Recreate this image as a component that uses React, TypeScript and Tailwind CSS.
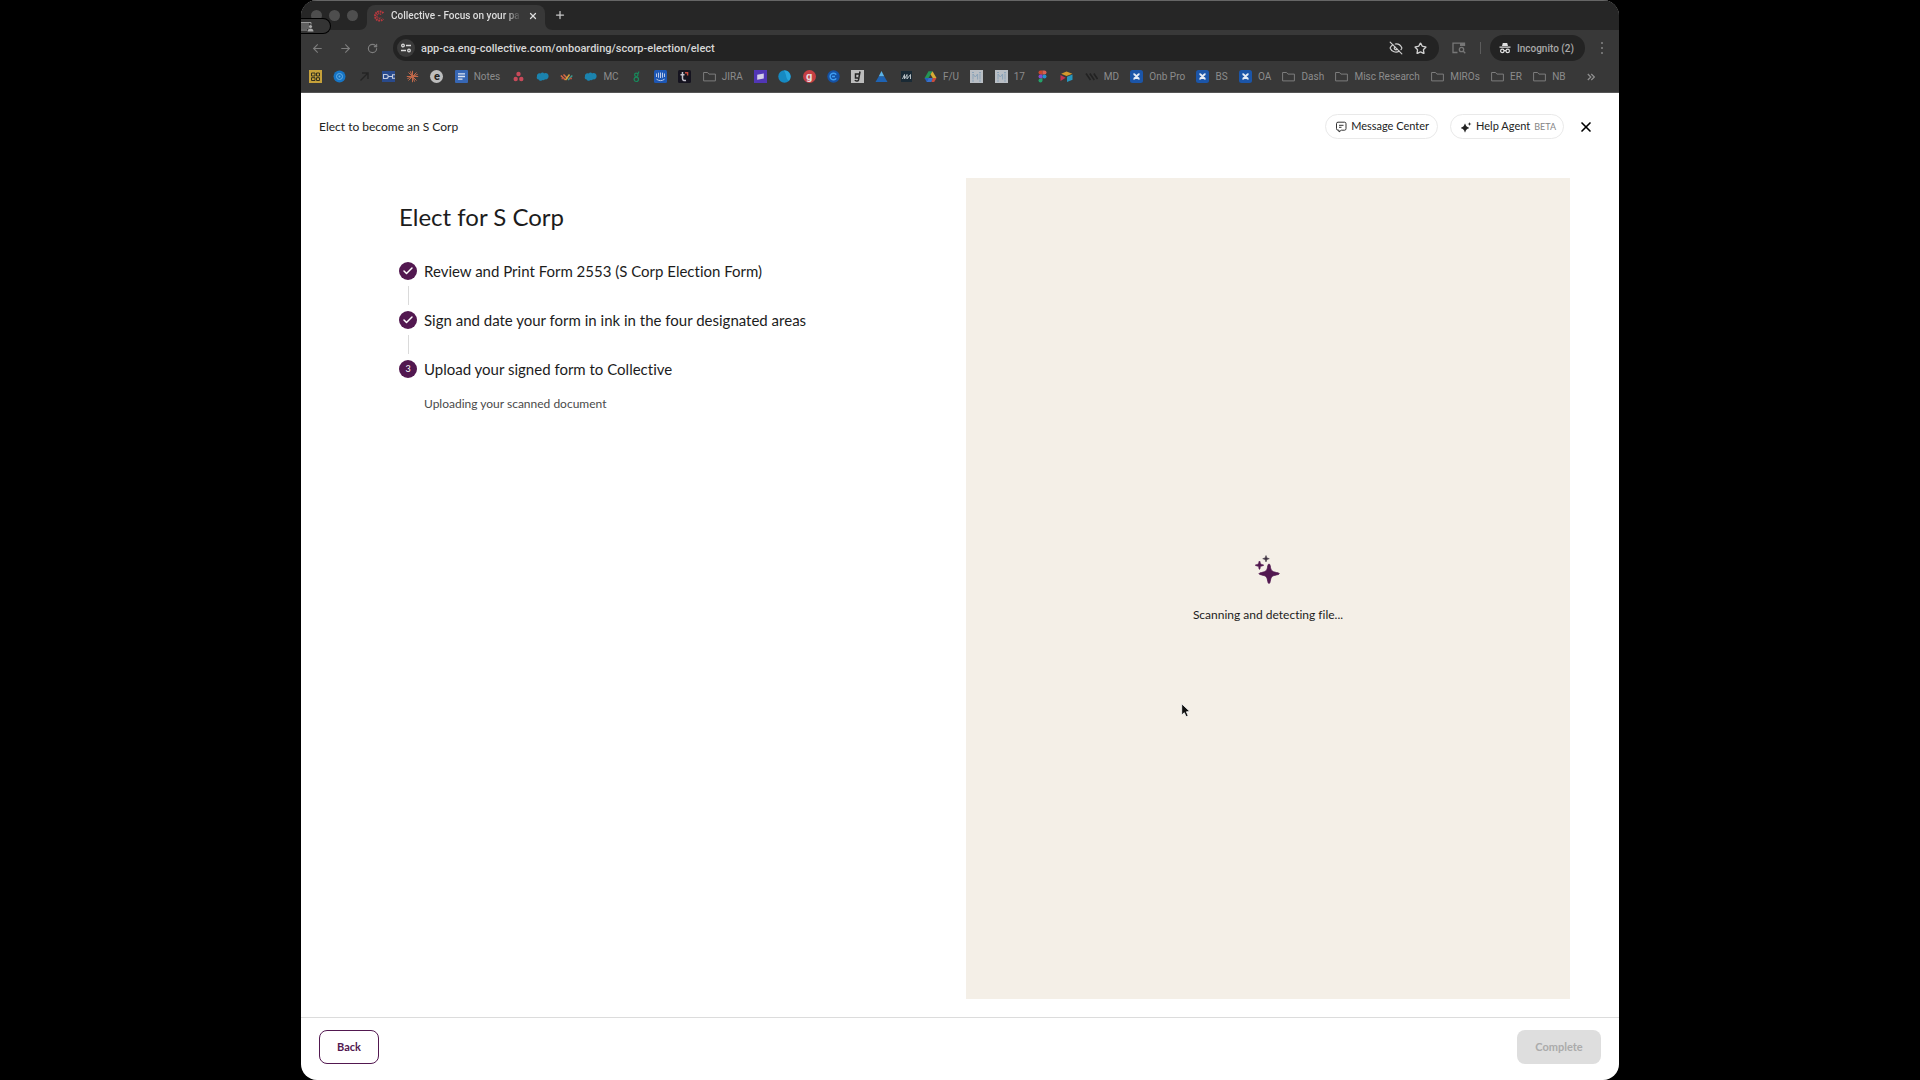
import type { ReactNode } from "react";
import { ArrowLeft, ArrowRight, Check, EyeOff, Plus, RotateCw, Star, X } from "lucide-react";

type BookmarkItem = { name: string; label?: string; icon: ReactNode };

const Svg = ({ children }: { children: ReactNode }) => (
  <svg viewBox="0 0 13 13" className="h-[13px] w-[13px]" aria-hidden="true">
    {children}
  </svg>
);

const Letter = ({ className, children }: { className: string; children: ReactNode }) => (
  <span className={`flex h-[13px] w-[13px] items-center justify-center text-[11px] leading-none font-bold ${className}`}>
    {children}
  </span>
);

const Folder = () => (
  <Svg>
    <path d="M.6 2.500h4l1.300 1.600h6.500v6.800H.6z" fill="none" stroke="#7c7c7c" strokeWidth="1" strokeLinejoin="round" />
  </Svg>
);

const Cloud = () => (
  <Svg>
    <path d="M1 6.200C.6 4 2.800 2.400 4.700 3.500 5.600 2.200 7.400 2.300 8.200 3.400c2-.9 4.400.3 4.400 2.800 0 2.300-1.800 3.500-3.600 3.100-.7 1.100-2 1.200-2.800.7-1.200 1.500-3 .8-3.500-.5C1 9.500.2 7.500 1 6.200z" fill="#1b83ae" />
  </Svg>
);

const Confluence = () => (
  <Svg>
    <rect width="13" height="13" rx="2.500" fill="#1b55a8" />
    <path d="M3.500 4c2 .2 4 4.800 6 5M9.500 4c-2 .2-4 4.800-6 5" fill="none" stroke="#e4ebf5" strokeWidth="2" />
  </Svg>
);

const Miro = () => (
  <Svg>
    <path d="M0 0h13v13H0z" fill="#b9bec4" />
    <path d="M3 9.500V4l2.300 3L7.600 4v5.500M10 3.500v6M2 2.500h2M9 2.500h2M2 11h2M9 11h2" fill="none" stroke="#8ba3b8" strokeWidth="1" />
  </Svg>
);

const bookmarks: BookmarkItem[] = [
  {
    name: "Grid",
    icon: (
      <Svg>
        <path d="M0 0h13v13H0z" fill="#c6a13a" />
        <path d="M2.500 3h3.500v3H2.500zM7.500 3h3v3h-3zM2.500 7.700H6v2.800H2.500zM7.500 7.700h3v2.800h-3z" fill="none" stroke="#33301f" strokeWidth="1" />
      </Svg>
    ),
  },
  {
    name: "Target",
    icon: (
      <Svg>
        <circle cx="6.500" cy="6.500" r="6" fill="#1674c4" />
        <circle cx="6.500" cy="6.500" r="3" fill="none" stroke="#65aee4" strokeWidth="1" />
        <circle cx="6.500" cy="6.500" r="1" fill="#65aee4" />
      </Svg>
    ),
  },
  {
    name: "Arrow",
    icon: (
      <Svg>
        <path d="M2.500 10.500 9.500 3.500M4 3h6v6" fill="none" stroke="#242424" strokeWidth="1.400" />
      </Svg>
    ),
  },
  {
    name: "Plug",
    icon: (
      <Svg>
        <path d="M0 1h13v11H0z" fill="#294a8c" />
        <path d="M1.500 4.500H4c3 0 3 4 0 4H1.500zM6.500 6.500H10M13 4.700h-2.500v3.600H13" fill="none" stroke="#c3cbdc" strokeWidth="1.100" />
      </Svg>
    ),
  },
  {
    name: "Burst",
    icon: (
      <Svg>
        <path d="M6.500.8v11.400M.8 6.500h11.400M2.500 2.500l8 8M10.500 2.500l-8 8M4.300 1.300l4.400 10.400M1.300 8.700l10.400-4.400" stroke="#c2694a" strokeWidth="1" />
      </Svg>
    ),
  },
  { name: "E", icon: <Letter className="rounded-full bg-[#bdbdbd] text-[#202020]">e</Letter> },
  {
    name: "Notes",
    label: "Notes",
    icon: (
      <Svg>
        <rect width="13" height="13" rx="1" fill="#3767b5" />
        <path d="M3 3.800h7M3 6.500h7M3 9.200h4.500" stroke="#dce4f2" strokeWidth="1.300" />
      </Svg>
    ),
  },
  {
    name: "Asana",
    icon: (
      <Svg>
        <g fill="#c84a5a">
          <circle cx="6.500" cy="4" r="2.200" />
          <circle cx="3.700" cy="9" r="2.200" />
          <circle cx="9.300" cy="9" r="2.200" />
        </g>
      </Svg>
    ),
  },
  { name: "Salesforce", icon: <Cloud /> },
  {
    name: "Waves",
    icon: (
      <Svg>
        <g fill="none" strokeWidth="1.500">
          <path d="M.8 5.500 5.500 10M3.500 4.500l4 4" stroke="#d86a45" />
          <path d="M5.500 10 9.500 4.500" stroke="#d4a33c" />
          <path d="m8 10 4.300-4.500" stroke="#3c9c91" />
          <path d="M1.500 8.500h3M9.500 8.500H12" stroke="#b4533e" />
        </g>
      </Svg>
    ),
  },
  { name: "MC", label: "MC", icon: <Cloud /> },
  {
    name: "Greenhouse",
    icon: (
      <Svg>
        <g fill="none" stroke="#188a5c" strokeWidth="1.200">
          <circle cx="6.300" cy="4.800" r="1.700" />
          <circle cx="6.300" cy="9.300" r="2.200" />
          <path d="M7.600 3.700C8.700 3.300 8.800 2.300 8.800 1.500" />
        </g>
      </Svg>
    ),
  },
  {
    name: "Intercom",
    icon: (
      <Svg>
        <rect width="13" height="13" rx="1.500" fill="#1d57b5" />
        <path d="M2.500 3.500v3.500M4.500 2.700v5M6.500 2.500v5.500M8.500 2.700v5M10.500 3.500V7M2.500 9.200c2.500 1.900 5.500 1.900 8 0" fill="none" stroke="#b9c9e8" strokeWidth="1" />
      </Svg>
    ),
  },
  {
    name: "T",
    icon: (
      <Svg>
        <rect width="13" height="13" rx="1.500" fill="#15131f" />
        <path d="M4.500 2v6.500c0 1.800 1.200 2.300 3.500 1.900M2.500 4.800h4" fill="none" stroke="#c2bfcb" strokeWidth="1.500" />
        <path d="M7 2.800h2.600v2.700" fill="none" stroke="#c84a3f" strokeWidth="1.400" />
      </Svg>
    ),
  },
  { name: "JIRA", label: "JIRA", icon: <Folder /> },
  {
    name: "Flag",
    icon: (
      <Svg>
        <path d="M0 0h13v13H0z" fill="#5136b5" />
        <path d="m3.200 4.800 6.600-1.300v5L3.200 9.800z" fill="#d4cfe9" />
      </Svg>
    ),
  },
  {
    name: "Globe",
    icon: (
      <Svg>
        <circle cx="6.500" cy="6.500" r="6.200" fill="#1689c2" />
        <path d="M6 .5a6.200 6.200 0 0 1 5 10.200C7.500 9 9 5 6 .5z" fill="#27a4dc" />
      </Svg>
    ),
  },
  { name: "G", icon: <Letter className="rounded-full bg-[#c53f43] text-[#e9dfe0]">g</Letter> },
  {
    name: "Circle",
    icon: (
      <Svg>
        <circle cx="6.500" cy="6.500" r="6.200" fill="#1552a5" />
        <path d="M9.200 4.700a3.300 3.300 0 1 0 0 3.600M5 6.500h3" fill="none" stroke="#3f9df0" strokeWidth="1.500" />
      </Svg>
    ),
  },
  {
    name: "Script",
    icon: (
      <Svg>
        <path d="M0 0h13v13H0z" fill="#bcbcbc" />
        <path d="M9 1.500 7.500 10c-.5 1.500-3 1.300-3.500 0M8 4H4.500v4H7" fill="none" stroke="#232323" strokeWidth="1.500" />
      </Svg>
    ),
  },
  {
    name: "Peak",
    icon: (
      <Svg>
        <path d="m6.500 1 2.800 5.500H3.700z" fill="#5bb3e8" />
        <path d="M3.700 6.500h5.600L12.500 12H.5z" fill="#1e63b4" />
      </Svg>
    ),
  },
  {
    name: "Waveform",
    icon: (
      <Svg>
        <path d="M1 1h11v11H1z" fill="#1a2a35" />
        <path d="m2.500 9 2-4.500V9l2.500-4.500V9l3.500-4.500V9" fill="none" stroke="#b9c1c6" strokeWidth="1" />
      </Svg>
    ),
  },
  {
    name: "Drive",
    label: "F/U",
    icon: (
      <Svg>
        <path d="M4.500 1.200h4L4.300 8.500.5 8.300z" fill="#259455" />
        <path d="m8.500 1.200 4 6.800H8.700L6.500 4.300z" fill="#d6ab34" />
        <path d="M4 8h5l-1.500 4H2.700z" fill="#3971cb" />
        <path d="m.5 8 2.200 4L5 8z" fill="#245fbd" />
        <path d="M8.700 8h3.800l-2.300 4H7.500z" fill="#ca4b3d" />
      </Svg>
    ),
  },
  { name: "Board", icon: <Miro /> },
  { name: "Board 17", label: "17", icon: <Miro /> },
  {
    name: "Figma",
    icon: (
      <Svg>
        <path d="M6.500.5h-2a2 2 0 1 0 0 4h2z" fill="#c9472c" />
        <path d="M6.500.5h2a2 2 0 1 1 0 4h-2z" fill="#d96053" />
        <path d="M6.500 4.500h-2a2 2 0 1 0 0 4h2z" fill="#8549cf" />
        <circle cx="8.500" cy="6.500" r="2" fill="#2493cf" />
        <path d="M6.500 8.500h-2a2 2 0 1 0 2 2z" fill="#24a26a" />
      </Svg>
    ),
  },
  {
    name: "Airtable",
    icon: (
      <Svg>
        <path d="m6.500 1.500 5.800 2.200-5.800 2.200L1.200 3.700z" fill="#d49a2b" />
        <path d="m7 6.800 5.500-2.200v5.200L7 12z" fill="#2796bd" />
        <path d="M.5 5v6l5.200-3.200z" fill="#c43350" />
      </Svg>
    ),
  },
  {
    name: "MD",
    label: "MD",
    icon: (
      <Svg>
        <path d="m1 3.500 4.500 6.500M4.800 3.500 9.300 10M8.800 3.500l3.700 5.500" stroke="#222" strokeWidth="1.600" />
      </Svg>
    ),
  },
  { name: "Onb Pro", label: "Onb Pro", icon: <Confluence /> },
  { name: "BS", label: "BS", icon: <Confluence /> },
  { name: "OA", label: "OA", icon: <Confluence /> },
  { name: "Dash", label: "Dash", icon: <Folder /> },
  { name: "Misc Research", label: "Misc Research", icon: <Folder /> },
  { name: "MIROs", label: "MIROs", icon: <Folder /> },
  { name: "ER", label: "ER", icon: <Folder /> },
  { name: "NB", label: "NB", icon: <Folder /> },
];

const steps = [
  { title: "Review and Print Form 2553 (S Corp Election Form)", done: true },
  { title: "Sign and date your form in ink in the four designated areas", done: true },
  { title: "Upload your signed form to Collective", done: false },
];

const TabStrip = () => (
  <div className="relative flex h-[30px] items-end border-t border-[#666] bg-[#262626] pl-[10px]">
    <div className="flex h-[29px] items-center gap-[7px]">
      <span className="h-[11px] w-[11px] rounded-full bg-[#4e4e4e]"></span>
      <span className="h-[11px] w-[11px] rounded-full bg-[#4e4e4e]"></span>
      <span className="h-[11px] w-[11px] rounded-full bg-[#4e4e4e]"></span>
    </div>
    <div className="relative ml-[9px] flex h-[25px] w-[178px] items-center rounded-t-[8px] bg-[#383838] pr-[7px] pb-[4px] pl-[6px]">
      <svg viewBox="0 0 8 8" className="absolute bottom-0 -left-[8px] h-[8px] w-[8px]">
        <path d="M8 0v8H0c5 0 8-3 8-8z" fill="#383838" />
      </svg>
      <svg viewBox="0 0 8 8" className="absolute -right-[8px] bottom-0 h-[8px] w-[8px]">
        <path d="M0 0v8h8C3 8 0 5 0 0z" fill="#383838" />
      </svg>
      <svg viewBox="0 0 12 12" className="h-[12px] w-[12px] shrink-0">
        <path d="M10.300 3.200a4.600 4.600 0 1 0 0 5.600" fill="none" stroke="#b8383e" strokeWidth="2" strokeDasharray="1.700 .7" />
        <path d="M8 4.600a2.300 2.300 0 1 0 0 2.800" fill="none" stroke="#b8383e" strokeWidth="1.300" strokeDasharray="1.200 .6" />
      </svg>
      <span className="ml-[6px] w-[130px] mask-r-from-88% text-[10px] leading-4 font-medium whitespace-nowrap text-[#dcdcdc]">
        Collective - Focus on your pa
      </span>
      <button aria-label="Close tab" className="ml-auto text-[#dcdcdc]">
        <X className="h-[10px] w-[10px]" strokeWidth={3} />
      </button>
    </div>
    <button aria-label="New tab" className="mb-[9px] ml-[9px] text-[#c8c8c8]">
      <Plus className="h-[12px] w-[12px]" strokeWidth={2.5} />
    </button>
    {/* screen sharing badge */}
    <div className="absolute top-[17px] left-0 z-10 flex h-[16px] w-[30px] items-center rounded-r-full border border-l-0 border-black bg-[#343434]">
      <svg viewBox="0 0 13 11" className="h-[11px] w-[13px]">
        <path d="M0 2h8v6H0z" fill="#606060" />
        <path d="M0 1.500h10v2M0 9h6" fill="none" stroke="#9a9a9a" />
        <circle cx="9.500" cy="5.500" r="1.600" fill="#aaa" />
        <path d="M6.500 10.500c0-4 6-4 6 0z" fill="#aaa" />
      </svg>
    </div>
  </div>
);

const Toolbar = () => (
  <div className="flex h-[36px] items-center pr-[11px] pl-[10px]">
    <div className="flex items-center gap-[15px] text-[#7d7d7d]">
      <button aria-label="Back"><ArrowLeft className="h-[13px] w-[13px]" /></button>
      <button aria-label="Forward"><ArrowRight className="h-[13px] w-[13px]" /></button>
      <button aria-label="Reload"><RotateCw className="h-[11px] w-[11px]" strokeWidth={2.5} /></button>
    </div>
    <div className="ml-[15px] flex h-[26px] flex-1 items-center rounded-full bg-[#232323] pr-[12px] pl-[4px]">
      <button aria-label="Site information" className="flex h-[18px] w-[18px] items-center justify-center rounded-full bg-[#3a3a3a] text-[#dcdcdc]">
        <svg viewBox="0 0 12 12" className="h-[12px] w-[12px]" fill="none" stroke="currentColor" strokeWidth="1.300">
          <circle cx="3" cy="3.500" r="1.300" />
          <path d="M6 3.500h5M1 8.500h5" />
          <circle cx="9" cy="8.500" r="1.300" />
        </svg>
      </button>
      <input
        aria-label="Address"
        defaultValue="app-ca.eng-collective.com/onboarding/scorp-election/elect"
        className="ml-[6px] min-w-0 flex-1 bg-transparent pt-[2px] text-[11px] leading-4 font-medium text-[#d6d6d6] outline-none"
      />
      <div className="flex items-center gap-[11px] text-[#d0d0d0]">
        <button aria-label="Tracking protection"><EyeOff className="h-[14px] w-[14px]" /></button>
        <button aria-label="Bookmark this page"><Star className="h-[13px] w-[13px]" strokeWidth={2.5} /></button>
      </div>
    </div>
    <button aria-label="Search tabs" className="ml-[13px] text-[#777]">
      <svg viewBox="0 0 14 12" className="h-[12px] w-[14px]" fill="none" stroke="currentColor" strokeWidth="1.300">
        <path d="M5.500 10.500H1V1.200h11.500V4" />
        <path d="M8 1h5v3H8z" fill="currentColor" stroke="none" />
        <circle cx="9.500" cy="7.500" r="2.200" />
        <path d="m11 9 2.300 2.300" />
      </svg>
    </button>
    <span className="mr-[9px] ml-[14px] h-[12px] w-px bg-[#5c5c5c]"></span>
    <button className="mr-[11px] flex h-[26px] items-center gap-[6px] rounded-full bg-[#232323] pr-[11px] pl-[9px] text-[10px] font-medium text-[#a9a9a9]">
      <svg viewBox="0 0 12 12" className="h-[12px] w-[12px]">
        <path d="M3.800 1h4.400l.8 3H3zM.5 4.500h11v1.200H.5z" fill="#e0e0e0" />
        <g fill="none" stroke="#e0e0e0" strokeWidth="1.200">
          <circle cx="3.300" cy="8.900" r="1.700" />
          <circle cx="8.700" cy="8.900" r="1.700" />
          <path d="M5 8.700h2" />
        </g>
      </svg>
      Incognito (2)
    </button>
    <button aria-label="Menu" className="flex w-[12px] flex-col items-center gap-[3px]">
      <span className="h-[2px] w-[2px] rounded-full bg-[#858585]"></span>
      <span className="h-[2px] w-[2px] rounded-full bg-[#858585]"></span>
      <span className="h-[2px] w-[2px] rounded-full bg-[#858585]"></span>
    </button>
  </div>
);

const BookmarksBar = () => (
  <div className="flex h-[27px] items-center border-b border-[#555] pr-[24px] pb-[5px] pl-[8px]">
    <nav className="flex flex-1 items-center justify-between">
      {bookmarks.map((item) => (
        <a key={item.name} href="#" aria-label={item.name} className="flex items-center gap-[6px] text-[10px] leading-3 whitespace-nowrap text-[#8c8c8c]">
          {item.icon}
          {item.label}
        </a>
      ))}
    </nav>
    <button aria-label="More bookmarks" className="ml-[21px]">
      <svg viewBox="0 0 8 8" className="h-[8px] w-[8px]" fill="none" stroke="#909090" strokeWidth="1.200">
        <path d="m.8 1 3 3-3 3M4.300 1l3 3-3 3" />
      </svg>
    </button>
  </div>
);

const PageHeader = () => (
  <header className="flex h-[67px] items-center pr-[25px] pl-[18px] text-[11px] text-[#222]">
    <span className="text-[12px]">Elect to become an S Corp</span>
    <button className="ml-auto flex h-[25px] items-center gap-[4px] rounded-full border border-[#e9e9e9] pr-[8px] pl-[9px]">
      <svg viewBox="0 0 12 12" className="h-[12px] w-[12px]" fill="none" stroke="#333" strokeWidth="1">
        <path d="M3 1.200h6.500a1.500 1.500 0 0 1 1.500 1.500v5a1.500 1.500 0 0 1-1.500 1.500H6.300L4 11V9.200H3a1.500 1.500 0 0 1-1.500-1.500v-5A1.500 1.500 0 0 1 3 1.200zM4 4.300h4.500M4 6.300h2.500" />
      </svg>
      Message Center
    </button>
    <button className="ml-[12px] flex h-[25px] items-center gap-[4px] rounded-full border border-[#e9e9e9] pr-[7px] pl-[9px]">
      <svg viewBox="0 0 12 12" className="h-[12px] w-[12px]" fill="#222">
        <path d="M5.300 2.800q.4 3 3.700 3.900v.6q-3.300.9-3.700 3.900h-.6Q4.300 8.200 1 7.300v-.6q3.300-.9 3.700-3.900zM9.500 1l.5 1.500 1.500.5-1.500.5L9.500 5 9 3.500 7.500 3 9 2.500z" />
      </svg>
      Help Agent
      <span className="text-[9px] text-[#858585]">BETA</span>
    </button>
    <button aria-label="Close" className="ml-[14px] text-black">
      <X className="h-[16px] w-[16px]" strokeWidth={2.5} />
    </button>
  </header>
);

const StepList = () => (
  <ol className="mt-[29px]">
    {steps.map((step, i) => (
      <li key={step.title}>
        <div className="flex h-[18px] items-center gap-[7px] text-[15px] leading-[18px] whitespace-nowrap">
          <span className="flex h-[18px] w-[18px] items-center justify-center rounded-full bg-[#521850] text-[9px] text-white">
            {step.done ? <Check className="h-[12px] w-[12px]" strokeWidth={3} /> : i + 1}
          </span>
          {step.title}
        </div>
        {i < steps.length - 1 && <div className="my-[6px] ml-[9px] h-[19px] w-px bg-[#dadada]"></div>}
      </li>
    ))}
  </ol>
);

export default function App() {
  return (
    <div className="min-h-screen bg-black">
      <div className="mx-auto flex min-h-screen w-full max-w-[1318px] flex-col overflow-hidden rounded-[16px] bg-white font-['Lato',sans-serif] [font-variant-ligatures:none]">
        <div className="bg-[#383838] font-['Roboto',sans-serif]">
          <TabStrip />
          <Toolbar />
          <BookmarksBar />
        </div>

        <PageHeader />

        <main className="grid flex-1 grid-cols-[665fr_604fr] pt-[18px] pr-[49px] pb-[18px] text-[#1c1c1c]">
          <section className="pt-[23px] pl-[98px]">
            <h1 className="text-[24px] leading-8">Elect for S Corp</h1>
            <StepList />
            <p className="mt-4 ml-[25px] text-[12px] leading-5 text-[#4a4a4a]">Uploading your scanned document</p>
          </section>

          <section className="relative flex flex-col items-center justify-center bg-[#f4efe7] pt-[3px]">
            <svg viewBox="0 0 26 30" className="h-[30px] w-[26px]" fill="#521850">
              <path d="M14 9q.9 0 1.200 1.800c.8 4.600 1.300 5.700 6.300 6.700q2.800.3 2.800 1.200t-2.800 1.200c-5 1-5.500 2.100-6.300 6.700Q14.900 28.500 14 28.500t-1.200-1.900c-.8-4.600-1.300-5.700-6.300-6.700q-2.500-.4-2.500-1.200t2.500-1.200c5-1 5.500-2.100 6.300-6.700Q13.100 9 14 9z" stroke="#521850" strokeWidth=".8" />
              <path d="M4.500 6q.6 0 .9 2.300.3.900 1.500 1.100 1.900.3 1.900.8t-1.900.8q-1.200.2-1.500 1.100-.3 2.400-.9 2.400t-.9-2.400q-.3-.9-1.500-1.100-1.900-.3-1.900-.8t1.900-.8q1.200-.2 1.500-1.100Q3.900 6 4.500 6z" stroke="#521850" strokeWidth=".5" />
              <path d="m11 .5.900 2.400 2.400.8-2.400.9-.9 2.400-.9-2.400-2.400-.9 2.400-.8z" fill="#3d3040" stroke="#3d3040" strokeWidth=".5" />
            </svg>
            <p className="mt-[20px] text-[12px] leading-5">Scanning and detecting file...</p>
            {/* mouse pointer */}
            <svg viewBox="0 0 10 15" className="absolute top-[64%] left-[215px] h-[15px] w-[10px]">
              <path d="M.7.8v11.300l2.600-2.400 1.800 4 2.100-.9-1.800-4 3.500-.2z" fill="#111" stroke="#fff" strokeWidth=".8" />
            </svg>
          </section>
        </main>

        <footer className="flex justify-between border-t border-[#dcdcdc] pt-[12px] pr-[18px] pb-[16px] pl-[18px] text-[11px] font-bold">
          <button className="h-[34px] w-[60px] rounded-[8px] border border-[#521850] text-[#521850]">Back</button>
          <button disabled className="h-[34px] w-[84px] rounded-[8px] bg-[#dedede] text-[#ababab]">Complete</button>
        </footer>
      </div>
    </div>
  );
}
